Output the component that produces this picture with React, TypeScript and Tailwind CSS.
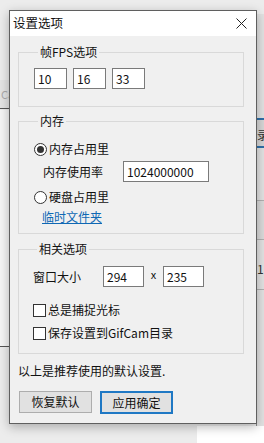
import React from "react";

const font = { fontFamily: '"Noto Sans CJK SC", "Noto Sans", sans-serif' };

function Radio({ checked }: { checked?: boolean }) {
  return (
    <span className="flex h-[13px] w-[13px] items-center justify-center rounded-full border border-[#333333] bg-white">
      {checked && <span className="h-[7px] w-[7px] rounded-full bg-[#333333]" />}
    </span>
  );
}

function Check() {
  return <span className="block h-[13px] w-[13px] border border-[#333333] bg-white" />;
}

function Field({ value, w }: { value: string; w: string }) {
  return (
    <div className={`flex h-[21px] items-center border border-[#7a7a7a] bg-white pl-[3px] text-[12px] text-[#111] ${w}`}>
      {value}
    </div>
  );
}

function Group({ title, children, className = "" }: { title: string; children: React.ReactNode; className?: string }) {
  return (
    <fieldset className={`ml-[8px] w-[226px] border border-[#d9d9d9] ${className}`}>
      <legend className="ml-[4px] px-[2px] text-[12px] leading-[14px] text-[#111]">{title}</legend>
      {children}
    </fieldset>
  );
}

export default function App() {
  return (
    <div className="relative h-[443px] w-[264px] overflow-hidden bg-[#ececec]" style={font}>
      {/* background windows */}
      <div className="absolute left-0 top-[80px] h-[29px] w-[12px] border-b border-[#555] bg-[#e4e4e4] pl-[1px] pt-[6px] text-[11px] text-[#aaa]">Ca</div>
      <div className="absolute left-0 top-[110px] h-[237px] w-[12px] border-b border-[#555] bg-[#f5f5f5]" />
      <div className="absolute left-[256px] top-[14px] h-[420px] w-[8px] border-l border-[#8a8a8a] bg-[#e2e2e2]">
        <div className="mt-[104px] h-[30px] border-y-2 border-[#2f6fa8] bg-[#d6d6d6] pt-[6px] text-[12px] text-[#333]">录</div>
        <div className="mt-[52px] h-[40px] border-y border-[#b0b0b0] bg-[#dadada]" />
        <div className="mt-[10px] h-[40px] border-b border-[#b0b0b0] pt-[10px] text-[12px] text-[#333]">1</div>
      </div>
      <div className="absolute left-[197px] top-[426px] h-[17px] w-[67px] bg-white" />

      {/* dialog */}
      <div className="absolute left-[9px] top-[10px] flex w-[248px] flex-col border border-[#5f5f5f] bg-[#f0f0f0] shadow-[0_3px_10px_rgba(0,0,0,0.28)]">
        <div className="flex h-[25px] items-center justify-between bg-white pl-[3px] pr-[8px]">
          <span className="text-[12.5px] text-[#111]">设置选项</span>
          <svg width="11" height="11" viewBox="0 0 11 11" className="mr-[1px]">
            <path d="M0.5 0.5 L10.5 10.5 M10.5 0.5 L0.5 10.5" stroke="#222" strokeWidth="1" fill="none" />
          </svg>
        </div>

        <div className="flex flex-col pb-[9px] pt-[9px]">
          <Group title="帧FPS选项" className="pb-[17px] pl-[15px] pt-[9px]">
            <div className="flex gap-[6px]">
              <Field value="10" w="w-[33px]" />
              <Field value="16" w="w-[33px]" />
              <Field value="33" w="w-[33px]" />
            </div>
          </Group>

          <Group title="内存" className="mt-[7px] pb-[8px] pl-[15px] pt-[13px]">
            <div className="flex h-[16px] items-center gap-[2px] text-[12px] text-[#111]">
              <Radio checked />
              <span>内存占用里</span>
            </div>
            <div className="mt-[4px] flex items-center text-[12px] text-[#111]">
              <span className="ml-[9px] w-[80px]">内存使用率</span>
              <Field value="1024000000" w="w-[86px]" />
            </div>
            <div className="mt-[7px] flex h-[16px] items-center gap-[2px] text-[12px] text-[#111]">
              <Radio />
              <span>硬盘占用里</span>
            </div>
            <div className="mt-[4px] h-[16px] pl-[8px] text-[12px] leading-[16px] text-[#0f68b4] underline">临时文件夹</div>
          </Group>

          <Group title="相关选项" className="mt-[8px] pb-[12px] pl-[14px] pt-[10px]">
            <div className="flex items-center text-[12px] text-[#111]">
              <span className="w-[70px]">窗口大小</span>
              <Field value="294" w="w-[41px]" />
              <span className="mb-[5px] w-[19px] text-center text-[11px] leading-[10px]">x</span>
              <Field value="235" w="w-[41px]" />
            </div>
            <div className="mt-[15px] flex h-[16px] items-center gap-[2px] text-[12px] text-[#111]">
              <Check />
              <span>总是捕捉光标</span>
            </div>
            <div className="mt-[7px] flex h-[16px] items-center gap-[2px] text-[12px] text-[#111]">
              <Check />
              <span>保存设置到GifCam目录</span>
            </div>
          </Group>

          <div className="mt-[9px] h-[16px] pl-[8px] text-[12px] leading-[16px] text-[#111]">以上是推荐使用的默认设置.</div>

          <div className="mt-[12px] flex gap-[8px] pl-[9px]">
            <button className="flex h-[22px] w-[73px] items-center justify-center border border-[#adadad] bg-[#e1e1e1] text-[12px] text-[#111]">
              恢复默认
            </button>
            <button className="flex h-[23px] w-[73px] items-center justify-center border-2 border-[#1f78c4] bg-[#e1e1e1] text-[12px] text-[#111]">
              应用确定
            </button>
          </div>
        </div>
      </div>
    </div>
  );
}
